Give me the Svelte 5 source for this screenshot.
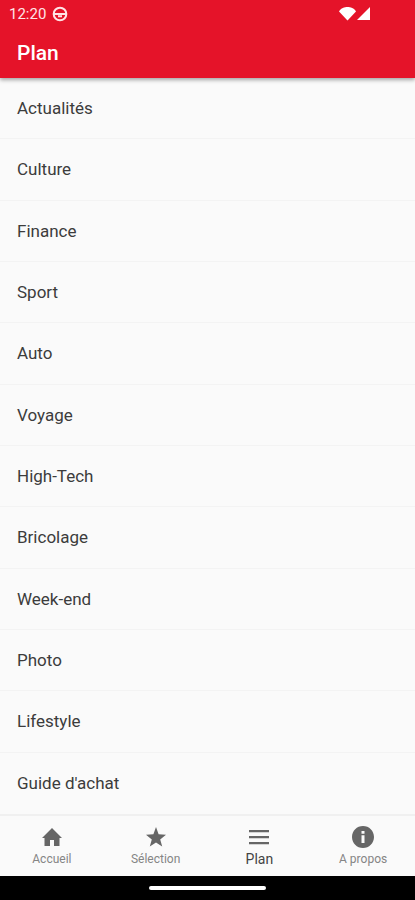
<script lang="ts">
  const sections = [
    'Actualités', 'Culture', 'Finance', 'Sport', 'Auto', 'Voyage',
    'High-Tech', 'Bricolage', 'Week-end', 'Photo', 'Lifestyle', "Guide d'achat",
  ];

  // 24x24 icon paths
  const tabs = [
    { id: 'accueil', label: 'Accueil', icon: 'M4.500 21v-8H2L12 3l10 10h-2.500v8H14v-6h-4v6z' },
    { id: 'selection', label: 'Sélection', icon: 'M12 17.500 18.200 21.500l-2-7L22 9.700l-7.400-.4L12 2 9.400 9.300 2 9.700l5.800 4.800-2 7z' },
    { id: 'plan', label: 'Plan', icon: 'M2 5h20v2.300H2zM2 11h20v2.300H2zM2 17h20v2.300H2z' },
    { id: 'apropos', label: 'A propos', icon: 'M12 1C5.900 1 1 5.900 1 12s4.900 11 11 11 11-4.900 11-11S18.100 1 12 1zm1.500 17h-3v-7.800h3zm0-9.300h-3V5.900h3z' },
  ];
  let active = $state('plan');
</script>

<div class="screen">
  <header>
    <div class="status">
      <span>12:20</span>
      <svg class="round" viewBox="0 0 24 24" aria-hidden="true">
        <circle cx="12" cy="12" r="9.500" />
        <path d="M3 12h18M9 15.500h6" />
      </svg>
      <svg class="signal" viewBox="0 0 32 16" aria-hidden="true">
        <path d="M0 5.500C2 2 5.500 1 8.500 1S15 2 17 5.500L8.500 14.500z" />
        <path d="M31 1v13H18z" />
      </svg>
    </div>
    <h1>Plan</h1>
  </header>

  <main>
    <ul>
      {#each sections as section}
        <li><a href="#{section}">{section}</a></li>
      {/each}
    </ul>
  </main>

  <nav>
    {#each tabs as tab}
      <button class:active={active === tab.id} onclick={() => (active = tab.id)}>
        <svg viewBox="0 0 24 24" aria-hidden="true"><path d={tab.icon} /></svg>
        <span>{tab.label}</span>
      </button>
    {/each}
  </nav>
  <div class="gesture"><div class="pill"></div></div>
</div>

<style>
  :global(body) { margin: 0; background: #fafafa; }
  .screen {
    display: flex;
    flex-direction: column;
    min-height: 100vh;
    background: #fafafa;
    color: #3c3c3c;
    font-family: Roboto, sans-serif;
  }
  header {
    position: relative;
    background: #e51329;
    color: #fff;
    box-shadow: 0 2px 4px rgba(0, 0, 0, 0.35);
  }
  .status {
    display: flex;
    align-items: center;
    height: 28px;
    padding: 0 44px 0 9px;
    font-size: 15px;
    color: #ffe4e6;
  }
  .round { width: 16px; height: 16px; margin-left: 6px; fill: none; stroke: #ffe4e6; stroke-width: 3; }
  .signal { width: 32px; height: 16px; margin-left: auto; fill: #fff; }
  h1 {
    margin: 0;
    padding: 0 17px;
    font-size: 21px;
    line-height: 50px;
    font-weight: 500;
  }
  main { display: flex; flex: 1; }
  ul {
    display: grid;
    flex: 1;
    grid-auto-rows: minmax(48px, 1fr);
    margin: 0;
    padding: 0;
    list-style: none;
  }
  li { display: flex; border-bottom: 1px solid #f3f3f3; }
  li:last-child { border-bottom: 0; }
  a {
    display: flex;
    flex: 1;
    align-items: center;
    padding: 0 17px;
    font-size: 17px;
    color: inherit;
    text-decoration: none;
  }
  nav { display: flex; border-top: 2px solid #f0f0f0; }
  button {
    display: flex;
    flex: 1 1 0;
    flex-direction: column;
    align-items: center;
    gap: 1px;
    height: 60px;
    padding: 9px 0 0;
    border: 0;
    background: none;
    color: #858585;
    font-family: inherit;
    font-size: 12px;
    line-height: 18px;
  }
  button svg { width: 24px; height: 24px; fill: #666; }
  button.active { font-size: 14px; color: #444; }
  .gesture { display: flex; align-items: center; justify-content: center; height: 24px; background: #000; }
  .pill { width: 28%; height: 4px; border-radius: 2px; background: #fff; }
</style>
